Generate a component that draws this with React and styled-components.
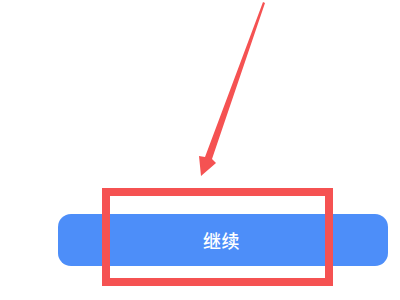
import React from 'react';
import styled, { createGlobalStyle } from 'styled-components';

const GlobalStyle = createGlobalStyle`
  html, body {
    margin: 0;
    padding: 0;
    background: #ffffff;
  }
  body {
    font-family: "Noto Sans CJK SC", "Noto Sans", sans-serif;
  }
`;

const Screen = styled.div`
  position: relative;
  width: 400px;
  height: 300px;
  overflow: hidden;
  background: #ffffff;
  display: flex;
  flex-direction: column;
  justify-content: flex-end;
  padding: 0 12px 34px 58px;
  box-sizing: border-box;
`;

const ContinueButton = styled.button`
  width: 330px;
  height: 52px;
  border: none;
  border-radius: 13px;
  background: #4d8ef9;
  color: #ffffff;
  font-family: "Noto Sans CJK SC", sans-serif;
  font-size: 18px;
  font-weight: 500;
  letter-spacing: 0.5px;
  padding: 0 3px 0 0;
  cursor: pointer;
`;

// annotation box drawn over the screenshot
const HighlightBox = styled.div`
  position: absolute;
  left: ${(p) => p.left}px;
  top: ${(p) => p.top}px;
  width: ${(p) => p.width}px;
  height: ${(p) => p.height}px;
  border: 8px solid #f55252;
  box-sizing: border-box;
  pointer-events: none;
`;

const Arrow = styled.svg`
  position: absolute;
  left: 0;
  top: 0;
  pointer-events: none;
`;

const App = () => {
  return (
    <>
      <GlobalStyle />
      <Screen>
        <ContinueButton>继续</ContinueButton>
        <HighlightBox left={102} top={188} width={231} height={98} />
        <Arrow width="400" height="300" viewBox="0 0 400 300">
          <polygon
            points="263,2 265,3 212,159 216,163 201,176 199,156 205,157"
            fill="#f55252"
          />
        </Arrow>
      </Screen>
    </>
  );
};

export default App;
